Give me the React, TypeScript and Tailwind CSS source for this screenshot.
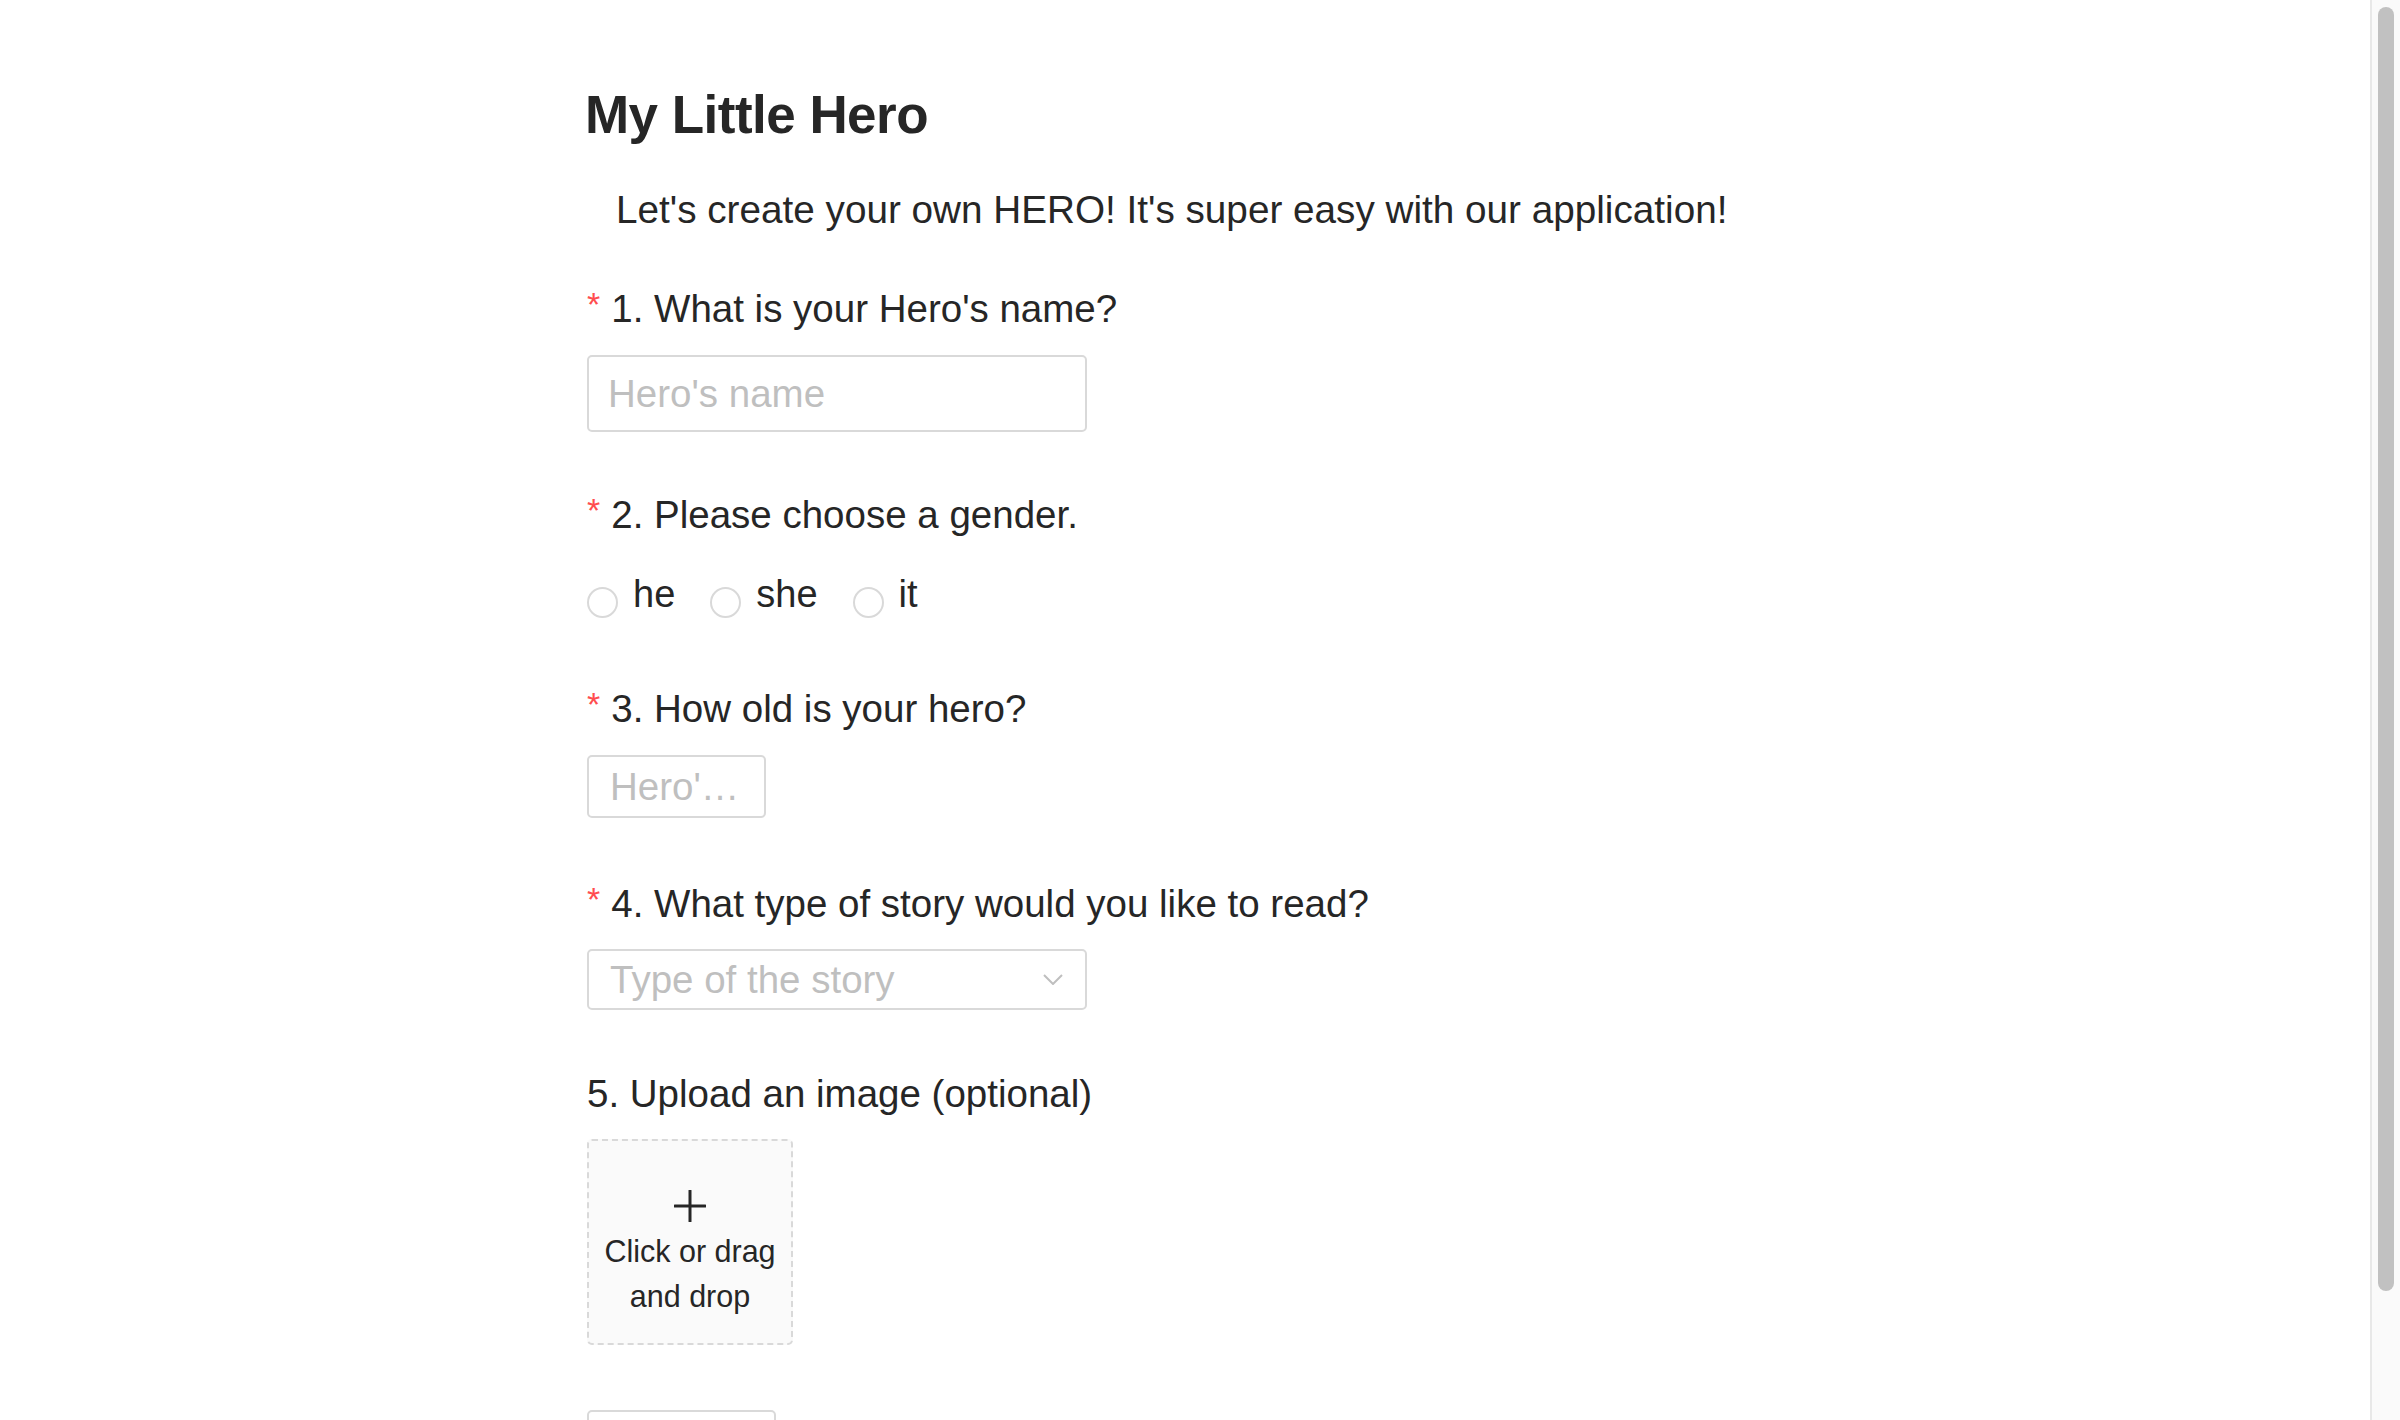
import React from "react";

function Label({
  required,
  className,
  children,
}: {
  required?: boolean;
  className: string;
  children: React.ReactNode;
}) {
  return (
    <div className={"h-[54px] whitespace-nowrap text-[38.5px] leading-[54px] " + className}>
      {required && (
        <span className="mr-[11px] align-[6px] text-[34px] leading-none text-[#ff4d4f]">*</span>
      )}
      <span>{children}</span>
    </div>
  );
}

export default function App() {
  return (
    <div className="flex h-screen w-full overflow-hidden bg-white font-['Liberation_Sans',Arial,sans-serif] text-[#262626]">
      <main className="min-w-0 flex-1 overflow-hidden">
        <div className="mx-auto w-[1196px] pt-[83px]">
          <h1 className="-ml-[2px] h-[64px] whitespace-nowrap text-[53px] font-bold leading-[64px] tracking-[-0.01em]">
            My Little Hero
          </h1>
          <p className="mt-[36px] h-[54px] whitespace-nowrap pl-[29px] text-[38.7px] leading-[54px]">
            Let's create your own HERO! It's super easy with our application!
          </p>

          <Label required className="mt-[45px]">
            1. What is your Hero's name?
          </Label>
          <input
            placeholder="Hero's name"
            className="mt-[19px] block h-[77px] w-[500px] rounded-[5px] border-2 border-[#d9d9d9] bg-white px-[19px] text-[38.5px] text-[#262626] outline-none placeholder:text-[#bfbfbf]"
          />

          <Label required className="mt-[56px]">
            2. Please choose a gender.
          </Label>
          <div className="mt-[25px] flex h-[54px] items-start whitespace-nowrap text-[38px] leading-[54px]">
            {["he", "she", "it"].map((g) => (
              <label key={g} className="mr-[35px] flex cursor-pointer items-start">
                <span className="mt-[20px] block size-[31px] rounded-full border-2 border-[#d9d9d9] bg-white" />
                <span className="ml-[15px]">{g}</span>
              </label>
            ))}
          </div>

          <Label required className="mt-[61px]">
            3. How old is your hero?
          </Label>
          <input
            placeholder="Hero's age"
            className="mt-[19px] block h-[63px] w-[179px] overflow-hidden text-ellipsis rounded-[5px] border-2 border-[#d9d9d9] bg-white px-[21px] text-[38.5px] text-[#262626] outline-none placeholder:text-[#bfbfbf]"
          />

          <Label required className="mt-[59px]">
            4. What type of story would you like to read?
          </Label>
          <div className="mt-[18px] flex h-[61px] w-[500px] items-center justify-between rounded-[5px] border-2 border-[#d9d9d9] bg-white pl-[21px] pr-[22px] text-[38.5px] text-[#bfbfbf]">
            <span className="whitespace-nowrap">Type of the story</span>
            <svg width="20" height="11" viewBox="0 0 20 11" className="block">
              <path d="M1 1 L10 10 L19 1" fill="none" stroke="#bfbfbf" strokeWidth="2" />
            </svg>
          </div>

          <Label className="mt-[57px]">5. Upload an image (optional)</Label>
          <div className="mt-[18px] flex size-[206px] cursor-pointer flex-col items-center rounded-[5px] border-2 border-dashed border-[#d9d9d9] bg-[#fafafa] pt-[49px] text-center text-[30.5px] leading-[45px]">
            <svg width="32" height="32" viewBox="0 0 32 32" className="block">
              <rect x="14.5" y="0" width="3" height="32" rx="0.5" fill="#262626" />
              <rect x="0" y="14.5" width="32" height="3" rx="0.5" fill="#262626" />
            </svg>
            <div className="mt-[7px]">Click or drag and drop</div>
          </div>

          <button
            aria-label="Submit"
            className="mt-[65px] block h-[61px] w-[189px] rounded-[5px] border-2 border-[#d9d9d9] bg-white"
          />
        </div>
      </main>
      <div className="flex h-screen w-[30px] shrink-0 flex-col border-l-2 border-[#e8e8e8] bg-[#fafafa] pl-[6px] pt-[7px]">
        <div className="h-[1284px] w-[16px] rounded-full bg-[#c1c1c1]" />
      </div>
    </div>
  );
}
